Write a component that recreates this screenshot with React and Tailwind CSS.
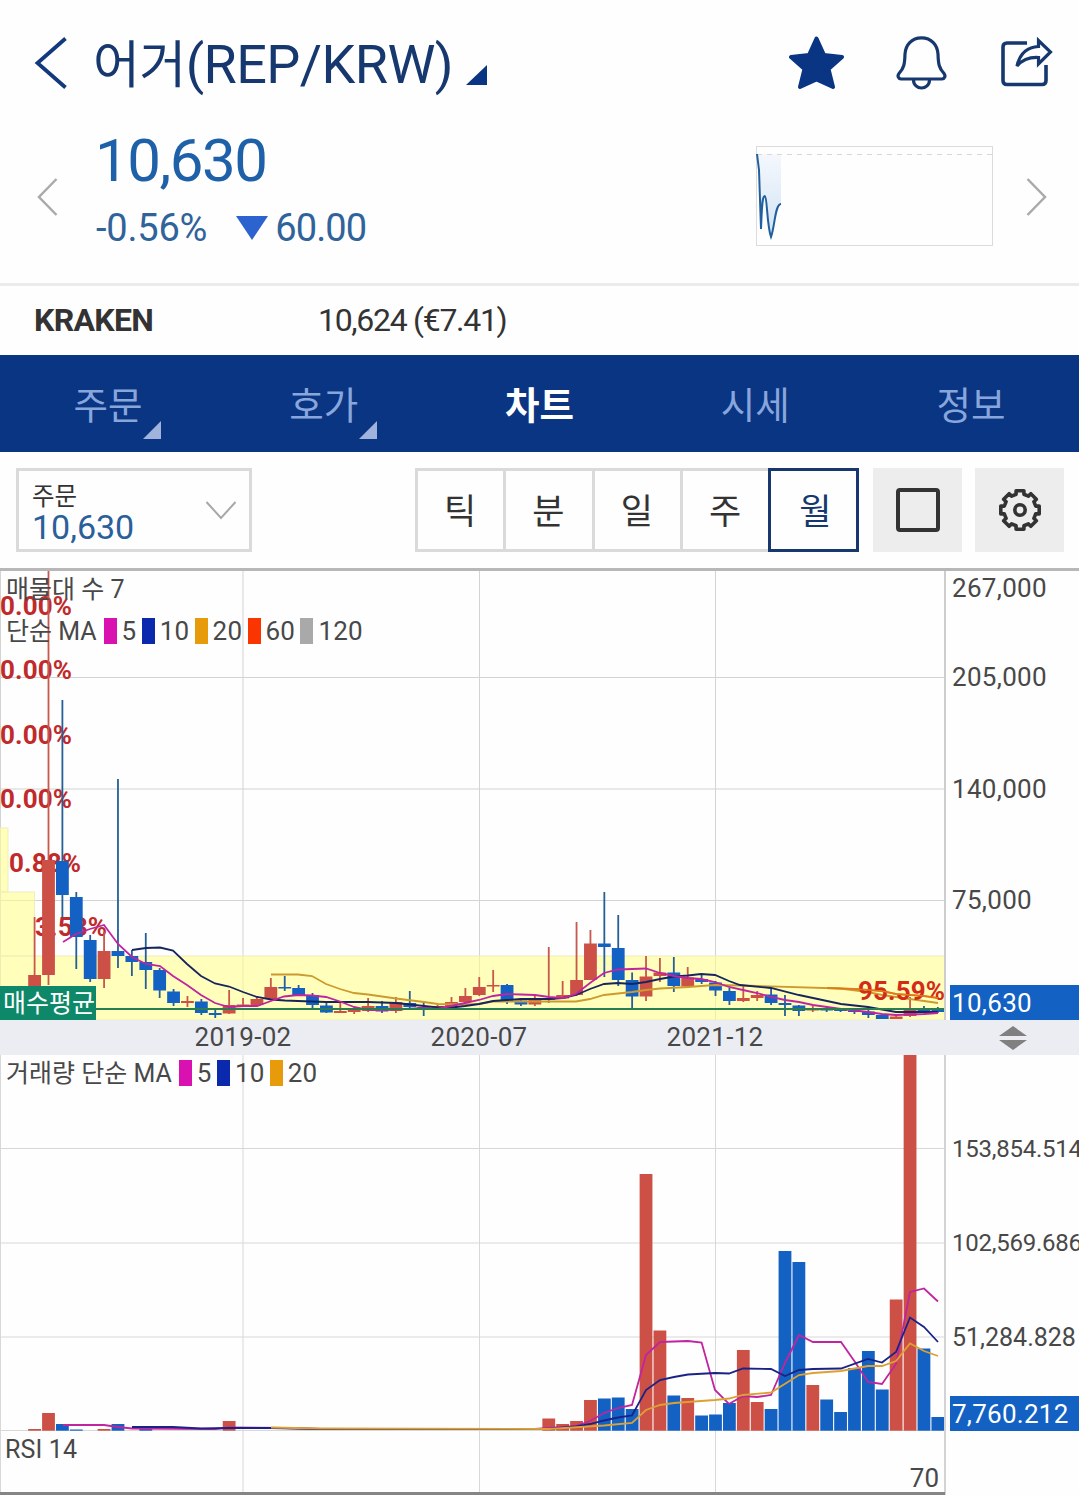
import React, { useState } from 'react';

const RED = '#cd5046';
const BLUE = '#1461c4';

const tabs = [
  { label: '주문', more: true },
  { label: '호가', more: true },
  { label: '차트' },
  { label: '시세' },
  { label: '정보' },
];

const periods = ['틱', '분', '일', '주', '월'];

// [up, high, body top, body bottom, low] in chart units
const candles = [
  [1, 917, 975, 1000, 1000], [1, 571, 860, 975, 985], [0, 700, 861, 895, 918], [0, 892, 897, 937, 969],
  [0, 935, 940, 979, 982], [1, 932, 951, 979, 988], [0, 779, 951, 956, 968], [0, 950, 956, 962, 976],
  [0, 933, 962, 970, 989], [0, 968, 970, 990.5, 998], [0, 989, 991.5, 1003, 1006], [1, 996, 1001, 1003, 1007],
  [0, 999, 1001.5, 1013, 1015], [0, 1010, 1013, 1015, 1018], [1, 990, 1005, 1013.5, 1014], [1, 998, 1004.5, 1006.5, 1007],
  [1, 996, 999, 1005, 1006], [1, 978, 987, 999, 1000], [0, 976, 987, 988.5, 991], [0, 985, 988, 995, 996],
  [0, 993, 995, 1005, 1008], [0, 1002, 1005.5, 1012.5, 1013], [1, 1002, 1011, 1013, 1013], [1, 1007, 1009.5, 1012, 1014],
  [1, 998, 1006, 1011, 1012], [0, 1001, 1006, 1011.5, 1013], [1, 997, 1002, 1011, 1013], [0, 991, 1003, 1007, 1008],
  [0, 1001, 1007, 1008.5, 1016], [1, 1005, 1006, 1008, 1008], [1, 997, 1002, 1007, 1008], [1, 988, 996, 1002, 1003],
  [1, 977, 987, 995, 996], [1, 970, 985, 986.5, 992], [0, 984, 985, 1001, 1004], [0, 998, 1000.5, 1004.5, 1006],
  [1, 996, 1000, 1004.5, 1006], [1, 947, 998, 1000, 1003], [1, 981, 995, 998.5, 999], [1, 922, 980, 995, 996],
  [1, 930, 943.5, 980, 980], [0, 892, 943.5, 947, 977], [0, 915, 948, 980, 986], [0, 972.5, 980, 996.5, 1009],
  [1, 956, 976.5, 996.5, 1001], [1, 958, 972.5, 976, 982], [0, 957, 972.5, 986, 992], [1, 967, 977.5, 986.5, 987],
  [0, 975, 979, 982, 984], [0, 981, 982.5, 990.5, 996], [0, 988, 991, 1001, 1005], [1, 985, 998, 1001, 1002],
  [1, 991, 995, 998, 1001], [0, 988, 994.5, 1003, 1005], [0, 995, 1003, 1005, 1016], [0, 1005, 1005.5, 1011, 1016],
  [1, 1006, 1008.5, 1010.5, 1012], [0, 1006, 1009, 1010.5, 1012], [0, 1008, 1009.5, 1011, 1012], [0, 1009, 1010.5, 1012, 1014],
  [0, 1009, 1011.5, 1015, 1018], [0, 1015, 1015, 1019, 1019], [1, 1015, 1016.5, 1019, 1019], [1, 997, 1010, 1016, 1017],
  [0, 1006, 1010, 1011.5, 1013], [0, 1007, 1010, 1012, 1013],
];

// [index, up, top]
const volumes = [
  [0, 1, 1429], [1, 1, 1413], [2, 0, 1424], [3, 0, 1429.5], [5, 1, 1429], [6, 0, 1424], [8, 0, 1429], [14, 1, 1421],
  [37, 1, 1418.5], [38, 1, 1424], [39, 1, 1421], [40, 1, 1400], [41, 0, 1398.5], [42, 0, 1397.5], [43, 0, 1409],
  [44, 1, 1174], [45, 1, 1330.5], [46, 0, 1395.5], [47, 1, 1398], [48, 0, 1415.5], [49, 0, 1414.5], [50, 0, 1403],
  [51, 1, 1350], [52, 1, 1402], [53, 0, 1409], [54, 0, 1251], [55, 0, 1262], [56, 1, 1385], [57, 0, 1399.5],
  [58, 0, 1412], [59, 0, 1368], [60, 0, 1351], [61, 0, 1389.5], [62, 1, 1299.5], [63, 1, 1050], [64, 0, 1348.5],
  [65, 0, 1417],
];

const priceLines = [
  { color: '#e0881a', points: '827,988 855,989 882,991 896,994 924,996 938,998' },
  { color: '#cc9a2e', points: '271,974.5 298,974.5 312,976 326,984 340,989 354,993 368,994.5 396,998.5 424,1002 438,1004 465,1004.5 479,1004 493,1001.5 576,1001.5 590,999 604,995 632,992 646,990 660,988.5 688,987 715,985 743,985.5 840,988.5 868,992 882,995 910,999 938,1003' },
  { color: '#17255f', points: '132,950 146,948 160,947.5 173,950.5 187,964 201,976 215,983.5 229,986.5 243,992 257,997 271,999.5 285,1000.5 298,1001 326,1002 368,1002 396,1003 410,1004.5 438,1007.5 452,1007.5 465,1006 479,1004 493,1001 507,1000 521,999 549,999 563,998 576,995 590,989 604,984 618,983 632,984 646,982 660,979 674,976.5 688,975.5 701,974 715,975 729,981 740,985 771,988 799,995 841,1004 868,1007 896,1012 938,1012' },
  { color: '#c0249f', points: '63,942 76,934 90,929 104,925 118,944 132,957 146,964 160,966 173,976 187,985 201,995 215,1003 229,1007 243,1006 257,1006 271,1001 284,996.5 298,995 312,995.5 326,997 340,1001.5 354,1007 368,1010 382,1010 396,1009.5 424,1008 437,1009 451,1006 465,1003 479,1000 493,996 507,994 521,994.5 535,995 549,997 563,998 576,994 590,983 604,973 618,969.5 632,969 646,968.5 660,973 674,976 688,978 701,979 715,982 729,987 743,990 757,993 771,997 785,1000 799,1002 813,1005 827,1007 841,1009 855,1010.5 868,1012 882,1014 896,1015 910,1014.5 924,1014 938,1013' },
];

const volumeLines = [
  { color: '#c0249f', points: '63,1425 104,1425 118,1427 132,1428.5 215,1429 229,1427.5 285,1428 320,1429 535,1429 549,1428 576,1426 590,1421 604,1413 618,1408 632,1405 646,1355 660,1342 688,1341 701.6,1342.5 715,1390 729,1404 743,1396 757,1397 771,1395 785,1363 799,1335 813,1342 841,1342 855,1362 868,1382 882,1384 896,1364 910,1292 924,1288.5 938,1301.5' },
  { color: '#1a2385', points: '132,1427 173,1427 201,1428.5 229,1428 271,1428 320,1429 549,1429 576,1426.5 590,1424 604,1420.5 618,1417.5 632,1415.5 646,1390 660,1380 674,1377 688,1374.5 715,1373 729,1373.5 743,1368.5 771,1369 785,1376 799,1370 813,1369 841,1368.5 868,1359 882,1362.5 896,1352 910,1317.5 924,1327 938,1342' },
  { color: '#dca132', points: '271,1427.5 320,1428.5 549,1429 604,1425.5 632,1423 646,1410 660,1405 674,1403 701,1401 715,1400 729,1398.5 743,1395 771,1392.5 799,1375 813,1373 841,1371 868,1366 882,1366 896,1361 910,1343.5 924,1351 938,1356' },
];

const profile = [
  ['0.00%', 0, 615],
  ['0.00%', 0, 679],
  ['0.00%', 0, 744],
  ['0.00%', 0, 808],
  ['0.88%', 9, 872],
  ['3.53%', 35, 936],
];

const centerX = (i) => 34.6 + 13.896 * i;

// Outline of the eight-tooth settings gear
const gearPoints = Array.from({ length: 8 }, (_, i) => i * 45)
  .flatMap((a) => [[a - 14, 16.2], [a - 11.5, 19.6], [a + 11.5, 19.6], [a + 14, 16.2]])
  .map(([deg, r]) => {
    const rad = (deg * Math.PI) / 180;
    return `${(22 + r * Math.cos(rad)).toFixed(2)},${(22 + r * Math.sin(rad)).toFixed(2)}`;
  })
  .join(' ');

const Legend = ({ title, items }) => (
  <div className="flex h-[34px] items-center text-[26px] leading-[34px] tracking-[0.2px] text-[#484848]">
    <span className="mt-[2px] mr-[7px] text-[25px] tracking-normal whitespace-pre">{title}</span>
    {items.map(([value, swatch]) => (
      <React.Fragment key={value}>
        <span className={`mr-[5px] h-[26px] w-[13px] ${swatch}`} />
        <span className="mr-[5.3px]">{value}</span>
      </React.Fragment>
    ))}
  </div>
);

const Header = () => (
  <header className="flex h-[125px] items-center text-[#0a3583]">
    <svg className="ml-[32px] h-[56px] w-[36px]" viewBox="0 0 36 56" fill="none" stroke="#12397c" strokeWidth="3.800">
      <path d="M33.500 3.500 5.500 28 33.500 52.500" />
    </svg>
    <h1 className="mt-[5px] ml-[25px] text-[54px] leading-[70px] tracking-[-0.6px] text-[#16386f]">
      <span className="text-[51px]">어거</span>(REP/KRW)
    </h1>
    <svg className="mt-[25px] ml-[13px] h-[20px] w-[21px]" viewBox="0 0 21 20" fill="#0a3583">
      <path d="M0 20 21 0V20Z" />
    </svg>
    <div className="mr-[25px] ml-auto flex items-center gap-[51px]">
      <svg className="h-[56px] w-[56px]" viewBox="0 0 56 56" fill="#0a3583" stroke="#0a3583" strokeWidth="4" strokeLinejoin="round">
        <path d="M28.500 3.500 36 20 54 22 40.500 34 45 52 28.500 44.500 12 52 16.500 34 3 22 21 20Z" />
      </svg>
      <svg className="h-[56px] w-[52px]" viewBox="0 0 52 56" fill="none" stroke="#16386f" strokeWidth="3.200" strokeLinejoin="round">
        <path d="M26.500 2.800C16.500 2.800 10.500 10 10 19C9.700 29 9 33 4 38.500C2 41 3.500 44 6 44H47C49.500 44 51 41 49 38.500C44 33 43.300 29 43 19C42.500 10 36.500 2.800 26.500 2.800Z" />
        <path d="M18.500 45C18.500 50 22.500 53 26.500 53S34.500 50 34.500 45" />
      </svg>
      <svg className="h-[56px] w-[56px]" viewBox="-1 0 56 56" fill="none" stroke="#16386f" strokeWidth="3.600" strokeLinejoin="round">
        <path d="M28 8H8Q4 8 4 12V45.500Q4 49.500 8 49.500H43Q47 49.500 47 45.500V30" />
        <path strokeWidth="3.200" strokeLinejoin="miter" d="M18 31C21 18 29 12 39.500 11.500V5.500L51.500 17 39.500 29V22.500C31 22 24 24 18 31Z" />
      </svg>
    </div>
  </header>
);

const PriceSummary = () => (
  <section className="flex h-[158px] items-start">
    <svg className="mt-[52px] ml-[36px] h-[40px] w-[22px]" viewBox="0 0 22 40" fill="none" stroke="#aaa" strokeWidth="2.500">
      <path d="M20.500 2 3 20 20.500 38" />
    </svg>
    <div className="ml-[38px] text-[#1f61a9]">
      <div className="-ml-px text-[60px] leading-[72px] tracking-[-1.5px]">10,630</div>
      <div className="mt-[6px] flex items-center text-[38px] leading-[50px] text-[#30639a]">
        <span className="tracking-[-0.2px]">-0.56%</span>
        <svg className="mr-[7px] ml-[29px] h-[24px] w-[32px]" viewBox="0 0 32 24" fill="#2d63cf">
          <path d="M0 0H32L16 24Z" />
        </svg>
        <span className="tracking-[-0.9px]">60.00</span>
      </div>
    </div>
    <svg className="mt-[21px] ml-auto h-[100px] w-[237px]" viewBox="0 0 237 100" fill="none">
      <defs>
        <linearGradient id="spark" x1="0" y1="0" x2="0" y2="1">
          <stop offset="0" stopColor="#f4f8fd" />
          <stop offset="1" stopColor="#d3e3f5" />
        </linearGradient>
      </defs>
      <rect x="0.500" y="0.500" width="236" height="99" stroke="#dcdcdc" />
      <path d="M1 8 3 24 5 83C6 60 7 50 9 50C11 50 11 75 15 91C19 80 20 58 25 58V8Z" fill="url(#spark)" />
      <path d="M1 8.500H236" stroke="#d8d8d8" strokeDasharray="5 5" />
      <path d="M1 8 3 24 5 83C6 60 6 50 9 50C11 50 11 80 15 91C19 80 19 58 25 58" stroke="#215f9d" strokeWidth="2" />
    </svg>
    <svg className="mt-[52px] mr-[31px] ml-[33px] h-[40px] w-[22px]" viewBox="0 0 22 40" fill="none" stroke="#aaa" strokeWidth="2.500">
      <path d="M1.500 2 19 20 1.500 38" />
    </svg>
  </section>
);

const Toolbar = ({ period, setPeriod }) => (
  <div className="flex h-[116px] items-center">
    <button className="ml-[16px] flex h-[84px] w-[236px] items-center justify-between border-3 border-[#dadada] pr-[12px] pl-[13px] text-left">
      <span className="flex flex-col pt-[5px]">
        <span className="text-[24.5px] leading-[29px] text-[#333]">주문</span>
        <span className="text-[34px] leading-[32px] text-[#2a6099]">10,630</span>
      </span>
      <svg className="h-[20px] w-[32px]" viewBox="0 0 32 20" fill="none" stroke="#a8a8a8" strokeWidth="2">
        <path d="M1.500 2 16 18 30.500 2" />
      </svg>
    </button>
    <div className="ml-[163px] flex">
      {periods.map((p) => (
        <button
          key={p}
          onClick={() => setPeriod(p)}
          className={`-mr-[3px] flex h-[84px] w-[91.3px] items-center justify-center border-3 pt-[4px] text-[35px] leading-none ${
            p === period ? 'z-10 border-[#16386f] pl-[3px] text-[#16386f]' : 'border-[#dadada] pr-px text-[#333]'
          }`}
        >
          {p}
        </button>
      ))}
    </div>
    <button className="ml-[17px] flex h-[84px] w-[89px] items-center justify-center bg-[#ededed]">
      <span className="h-[44px] w-[44px] rounded-[4px] border-4 border-[#333]" />
    </button>
    <button className="ml-[13px] flex h-[84px] w-[89px] items-center justify-center bg-[#ededed]">
      <svg className="h-[44px] w-[44px]" viewBox="0 0 44 44" fill="none" stroke="#333" strokeWidth="3.600" strokeLinejoin="round">
        <polygon points={gearPoints} />
        <circle cx="22" cy="22" r="5.200" />
      </svg>
    </button>
  </div>
);

const PriceChart = () => (
  <div className="relative h-[449px]">
    <svg className="block h-[449px] w-[1079px]" viewBox="0 571 1079 449" fontSize="26" fill="#484848">
      <g stroke="#d3d3d3">
        <path d="M.5 571V1020M243 571V1020M479.500 571V1020M715.500 571V1020" />
        <path d="M0 677.500H945M0 789H945M0 900.500H945" />
      </g>
      <g fill="#fffd8c" fillOpacity="0.6" stroke="#eeeebb" strokeWidth="1">
        <rect x="0" y="828" width="8" height="64" />
        <rect x="0" y="892" width="34.500" height="64" />
        <rect x="0" y="956" width="945" height="64" />
      </g>
      <g fill="#c02a2b" fontWeight="700" letterSpacing="0.1">
        {profile.map(([text, x, y]) => (
          <text key={y} x={x} y={y}>{text}</text>
        ))}
      </g>
      {candles.map(([up, high, top, bottom, low], i) => (
        <g key={i} fill={up ? RED : BLUE}>
          <rect x={centerX(i) - 0.9} y={high} width="1.800" height={low - high} fill={up ? '#c8574c' : '#265f98'} />
          <rect x={centerX(i) - 6.4} y={top} width="12.800" height={bottom - top} />
        </g>
      ))}
      {priceLines.map(({ color, points }) => (
        <polyline key={color} points={points} fill="none" stroke={color} strokeWidth="1.800" />
      ))}
      <text x="945" y="999.500" fill="#d42a18" fontWeight="700" letterSpacing="0.100" textAnchor="end">95.59%</text>
      <path d="M827 988 855 989 882 991 896 994 924 996 938 998" fill="none" stroke="#e0781a" strokeWidth="1.500" />
      <path d="M0 1009H945" stroke="#2a7d4f" strokeWidth="2" />
      <rect x="0" y="986" width="96" height="34" fill="#0d8868" />
      <text x="3" y="1012" fill="#fff" fontSize="25">매수평균</text>
      <path d="M945 571V1020" stroke="#cdcdcd" strokeWidth="2" />
      <g letterSpacing="0.300">
        <text x="952" y="597">267,000</text>
        <text x="952" y="686">205,000</text>
        <text x="952" y="798">140,000</text>
        <text x="952" y="909">75,000</text>
        <rect x="950" y="985" width="129" height="35" fill="#1461c4" />
        <text x="952" y="1012" fill="#fff">10,630</text>
      </g>
    </svg>
    <div className="absolute top-[1px] left-[6px]">
      <Legend title="매물대 수 7" items={[]} />
    </div>
    <div className="absolute top-[43px] left-[6px]">
      <Legend
        title="단순 MA"
        items={[
          ['5', 'bg-[#d911b0]'],
          ['10', 'bg-[#0a29ac]'],
          ['20', 'bg-[#e79a0a]'],
          ['60', 'bg-[#fb3500]'],
          ['120', 'bg-[#a9a9a9]'],
        ]}
      />
    </div>
  </div>
);

const VolumeChart = () => (
  <div className="relative h-[440px]">
    <svg className="block h-[440px] w-[1079px]" viewBox="0 1055 1079 440" fontSize="25" fill="#484848">
      <g stroke="#d8d8d8">
        <path d="M.5 1055V1495M243 1055V1495M479.500 1055V1495M715.500 1055V1495" />
        <path d="M0 1148.500H945M0 1243H945M0 1337H945M0 1430.500H945" />
      </g>
      {volumes.map(([i, up, top]) => (
        <rect key={i} x={centerX(i) - 6.4} y={top} width="12.800" height={1430.7 - top} fill={up ? RED : BLUE} />
      ))}
      {volumeLines.map(({ color, points }) => (
        <polyline key={color} points={points} fill="none" stroke={color} strokeWidth="1.800" />
      ))}
      <path d="M945 1055V1495" stroke="#d3d3d3" strokeWidth="2" />
      <path d="M0 1493.500H945" stroke="#858585" strokeWidth="3" />
      <g fontSize="24" letterSpacing="-0.250">
        <text x="952" y="1157">153,854.514</text>
        <text x="952" y="1251">102,569.686</text>
      </g>
      <text x="952" y="1346">51,284.828</text>
      <rect x="950" y="1396" width="129" height="35" fill="#1461c4" />
      <text x="952" y="1423" fill="#fff" fontSize="26" letterSpacing="0.250">7,760.212</text>
      <text x="939" y="1487" textAnchor="end" fontSize="26">70</text>
      <text x="5" y="1458" letterSpacing="0.150">RSI 14</text>
    </svg>
    <div className="absolute top-[1px] left-[6px]">
      <Legend
        title="거래량 단순 MA"
        items={[
          ['5', 'bg-[#d911b0]'],
          ['10', 'bg-[#0a29ac]'],
          ['20', 'bg-[#e79a0a]'],
        ]}
      />
    </div>
  </div>
);

const App = () => {
  const [activeTab, setActiveTab] = useState('차트');
  const [period, setPeriod] = useState('월');

  return (
    <div className="h-[1495px] w-[1079px] overflow-hidden bg-[#fefefe] font-['Roboto','Noto_Sans_CJK_KR',sans-serif]">
      <Header />
      <PriceSummary />
      <div className="flex h-[72px] items-center border-t-3 border-[#ebebeb] pb-[2px] text-[32px] text-[#333]">
        <span className="ml-[34px] w-[284px] font-bold tracking-[-0.7px]">KRAKEN</span>
        <span className="tracking-[-1.3px]">10,624 (€7.41)</span>
      </div>
      <nav className="grid h-[97px] grid-cols-5 bg-[#0a3583]">
        {tabs.map(({ label, more }) => (
          <button
            key={label}
            onClick={() => setActiveTab(label)}
            className={`relative flex items-center justify-center pt-[7px] text-[37.5px] leading-none ${
              label === activeTab ? 'font-bold text-white' : 'text-[#88a6dc]'
            }`}
          >
            {label}
            {more && (
              <svg className="absolute right-[55px] bottom-[13px] h-[18px] w-[18px]" viewBox="0 0 18 18" fill="#9fb3dc">
                <path d="M0 18 18 0V18Z" />
              </svg>
            )}
          </button>
        ))}
      </nav>
      <Toolbar period={period} setPeriod={setPeriod} />
      <main className="border-t-3 border-[#b7b7b7]">
        <PriceChart />
        <div className="flex h-[35px] items-center bg-[#ecedf3] pl-[125px] text-[26px] tracking-[0.3px] text-[#484848]">
          <span className="w-[236px] text-center">2019-02</span>
          <span className="w-[236px] text-center">2020-07</span>
          <span className="w-[236px] text-center">2021-12</span>
          <svg className="ml-[166px] h-[26px] w-[28px]" viewBox="0 0 28 26" fill="#808080">
            <path d="M0 11 14 1 28 11ZM0 15H28L14 25Z" />
          </svg>
        </div>
        <VolumeChart />
      </main>
    </div>
  );
};

export default App;
